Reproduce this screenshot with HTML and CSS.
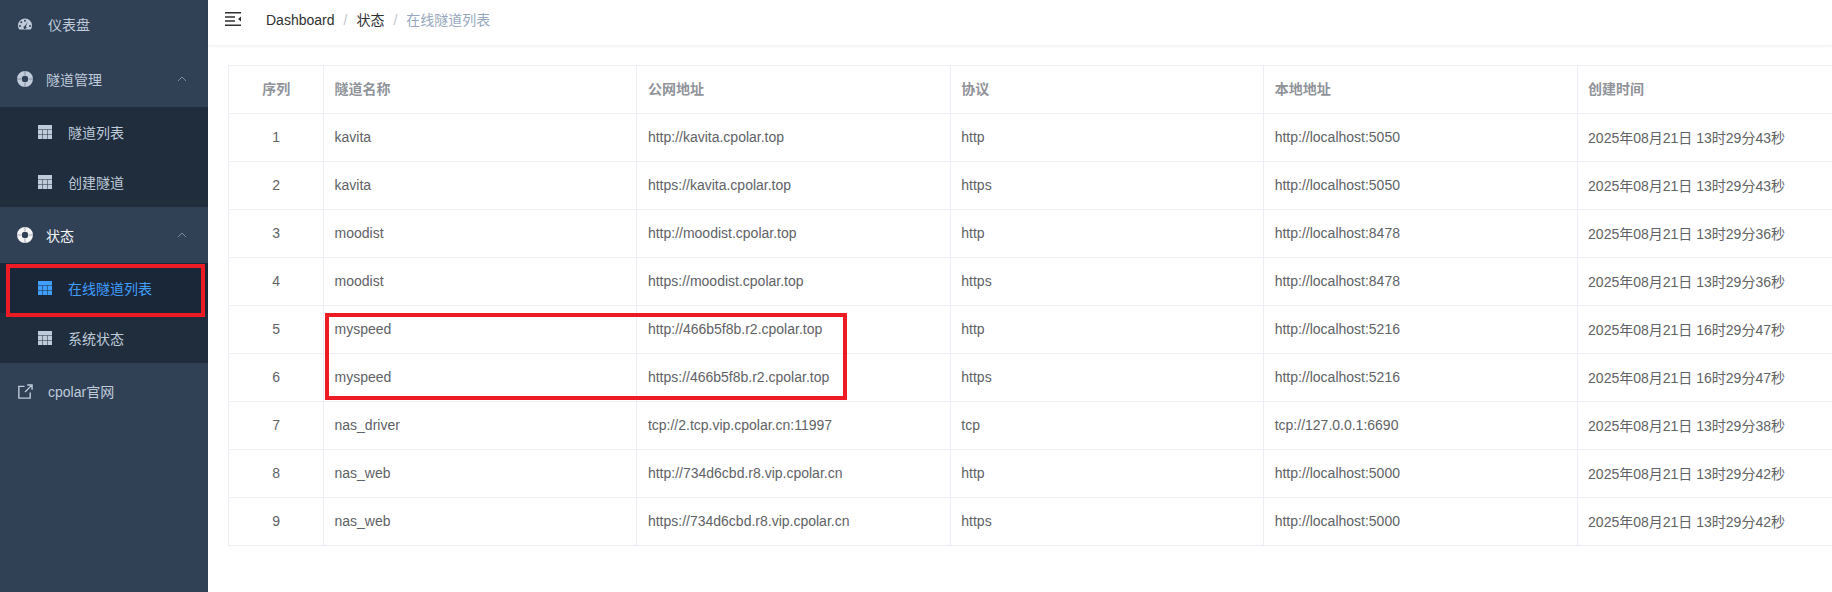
FILE: index.html
```html
<!DOCTYPE html>
<html lang="zh-CN">
<head>
<meta charset="utf-8">
<title>在线隧道列表</title>
<link rel="stylesheet" href="styles.css">
</head>
<body>
<div class="app">
  <aside class="sidebar">
    <a class="item first">
      <svg class="ic gauge" viewBox="1 2.200 14 11"><path fill-rule="evenodd" d="M8 2.200a7 7 0 0 0-7 7c0 1.500.5 2.900 1.300 4h11.400a7 7 0 0 0 1.300-4 7 7 0 0 0-7-7zM8 3.500a1 1 0 1 1 0 2 1 1 0 0 1 0-2zM4.300 5a1 1 0 1 1 0 2 1 1 0 0 1 0-2zM3 8.700a1 1 0 1 1 0 2 1 1 0 0 1 0-2zM13 8.700a1 1 0 1 1 0 2 1 1 0 0 1 0-2zM10.800 5.400l-1.900 4.500a1.500 1.500 0 1 1-1.200-.3z"/></svg>
      <span class="lbl">仪表盘</span>
    </a>
    <a class="item group">
      <svg class="ic ring" viewBox="0 0 16 16"><circle cx="8" cy="8" r="5.600" fill="none" stroke="currentColor" stroke-width="4.800"/><path class="notch" d="M8 0v4M8 12v4M0 8h4M12 8h4"/></svg>
      <span class="lbl tight">隧道管理</span>
      <svg class="chev" viewBox="0 0 10 6"><path d="M1 5l4-4 4 4" fill="none" stroke="currentColor"/></svg>
    </a>
    <div class="sub">
      <a class="subitem"><svg class="ic" viewBox="0 0 14 14"><path d="M0 0h14v14H0z" class="grid"/><path d="M0 4.500h14M0 9.500h14M4.500 4.500v9.500M9.500 4.500v9.500" class="gridline"/></svg><span class="lbl">隧道列表</span></a>
      <a class="subitem"><svg class="ic" viewBox="0 0 14 14"><path d="M0 0h14v14H0z" class="grid"/><path d="M0 4.500h14M0 9.500h14M4.500 4.500v9.500M9.500 4.500v9.500" class="gridline"/></svg><span class="lbl">创建隧道</span></a>
    </div>
    <a class="item group open">
      <svg class="ic ring" viewBox="0 0 16 16"><circle cx="8" cy="8" r="5.600" fill="none" stroke="currentColor" stroke-width="4.800"/><path class="notch" d="M8 0v4M8 12v4M0 8h4M12 8h4"/></svg>
      <span class="lbl tight">状态</span>
      <svg class="chev" viewBox="0 0 10 6"><path d="M1 5l4-4 4 4" fill="none" stroke="currentColor"/></svg>
    </a>
    <div class="sub">
      <a class="subitem active"><svg class="ic" viewBox="0 0 14 14"><path d="M0 0h14v14H0z" class="grid"/><path d="M0 4.500h14M0 9.500h14M4.500 4.500v9.500M9.500 4.500v9.500" class="gridline"/></svg><span class="lbl">在线隧道列表</span></a>
      <a class="subitem"><svg class="ic" viewBox="0 0 14 14"><path d="M0 0h14v14H0z" class="grid"/><path d="M0 4.500h14M0 9.500h14M4.500 4.500v9.500M9.500 4.500v9.500" class="gridline"/></svg><span class="lbl">系统状态</span></a>
    </div>
    <a class="item">
      <svg class="ic ext" viewBox="0 0 16 16"><path d="M7 2.500H.9v12.600H13V9M7.500 8.500L14 2M9.800 1h5.200v5.200" fill="none" stroke="currentColor" stroke-width="1.500"/></svg>
      <span class="lbl">cpolar官网</span>
    </a>
  </aside>
  <main class="main">
    <header class="topbar">
      <svg class="burger" viewBox="0 0 16 14"><path d="M0 .75h16M0 5h10M0 9h10M0 13.250h16" fill="none" stroke="#303133" stroke-width="1.500"/><path d="M16 4.500v5l-3-2.500z" fill="#303133"/></svg>
      <nav class="crumbs">
        <span class="crumb">Dashboard</span><span class="sep">/</span><span class="crumb">状态</span><span class="sep">/</span><span class="crumb last">在线隧道列表</span>
      </nav>
    </header>
    <section class="content">
      <table class="tbl">
        <colgroup><col class="c0"><col class="c1"><col class="c1"><col class="c1"><col class="c1"><col class="c1"></colgroup>
        <thead><tr><th class="num">序列</th><th>隧道名称</th><th>公网地址</th><th>协议</th><th>本地地址</th><th>创建时间</th></tr></thead>
        <tbody>
          <tr><td class="num">1</td><td>kavita</td><td>http://kavita.cpolar.top</td><td>http</td><td>http://localhost:5050</td><td>2025年08月21日 13时29分43秒</td></tr>
          <tr><td class="num">2</td><td>kavita</td><td>https://kavita.cpolar.top</td><td>https</td><td>http://localhost:5050</td><td>2025年08月21日 13时29分43秒</td></tr>
          <tr><td class="num">3</td><td>moodist</td><td>http://moodist.cpolar.top</td><td>http</td><td>http://localhost:8478</td><td>2025年08月21日 13时29分36秒</td></tr>
          <tr><td class="num">4</td><td>moodist</td><td>https://moodist.cpolar.top</td><td>https</td><td>http://localhost:8478</td><td>2025年08月21日 13时29分36秒</td></tr>
          <tr><td class="num">5</td><td>myspeed</td><td>http://466b5f8b.r2.cpolar.top</td><td>http</td><td>http://localhost:5216</td><td>2025年08月21日 16时29分47秒</td></tr>
          <tr><td class="num">6</td><td>myspeed</td><td>https://466b5f8b.r2.cpolar.top</td><td>https</td><td>http://localhost:5216</td><td>2025年08月21日 16时29分47秒</td></tr>
          <tr><td class="num">7</td><td>nas_driver</td><td>tcp://2.tcp.vip.cpolar.cn:11997</td><td>tcp</td><td>tcp://127.0.0.1:6690</td><td>2025年08月21日 13时29分38秒</td></tr>
          <tr><td class="num">8</td><td>nas_web</td><td>http://734d6cbd.r8.vip.cpolar.cn</td><td>http</td><td>http://localhost:5000</td><td>2025年08月21日 13时29分42秒</td></tr>
          <tr><td class="num">9</td><td>nas_web</td><td>https://734d6cbd.r8.vip.cpolar.cn</td><td>https</td><td>http://localhost:5000</td><td>2025年08月21日 13时29分42秒</td></tr>
        </tbody>
      </table>
    </section>
  </main>
  <div class="mark mark-side"></div>
  <div class="mark mark-table"></div>
</div>
</body>
</html>
```
FILE: styles.css
```css
* { box-sizing: border-box; }
html, body { margin: 0; height: 100%; overflow: hidden; background: #fff; }
body { font-family: "Liberation Sans", "Noto Sans CJK SC", sans-serif; font-size: 14px; }
.app { display: flex; position: relative; height: 592px; overflow: hidden; }

.sidebar { flex: 0 0 208px; background: #304156; color: #bfcbd9; }
.item { display: flex; align-items: center; height: 56px; padding-left: 18px; position: relative; }
.item.first { margin-top: -4px; height: 55px; }
.item .lbl { margin-left: 16px; }
.item .lbl.tight { margin-left: 13px; }
.item.open { color: #f4f4f5; }
.ic { width: 14px; height: 14px; fill: currentColor; flex: none; }
.gauge { height: 12px; }
.ext { width: 15px; height: 15px; margin-right: -1px; }
.ring { width: 16px; height: 16px; margin-left: -1px; }
.notch { fill: none; stroke: #304156; stroke-width: .7; opacity: .6; }
.chev { position: absolute; left: 177px; top: 25px; width: 10px; height: 6px; color: #7d8da0; }
.sub { background: #1f2d3d; }
.subitem { display: flex; align-items: center; height: 50px; padding-left: 38px; }
.subitem .lbl { margin-left: 16px; }
.subitem.active { background: #1a2738; color: #409eff; }
.grid { fill: currentColor; }
.gridline { fill: none; stroke: #1f2d3d; stroke-width: 1; opacity: .5; }
.active .gridline { stroke: #1a2738; }

.main { flex: 1; min-width: 0; }
.topbar { display: flex; align-items: center; height: 45px; padding: 0 0 7px 17px; box-shadow: 0 1px 4px rgba(0, 21, 41, .08); }
.burger { width: 16px; height: 14px; flex: none; }
.crumbs { margin-left: 25px; color: #303133; }
.sep { margin: 0 9px; color: #c0c4cc; }
.crumb.last { color: #97a8be; }

.content { padding: 20px; }
.tbl { border-collapse: collapse; table-layout: fixed; width: 1662px; color: #606266; }
.c0 { width: 95px; }
.c1 { width: 313.400px; }
.tbl th, .tbl td { height: 48px; padding: 0 10px 2px 10.500px; border: 1px solid #ebeef5; text-align: left; font-weight: 400; white-space: nowrap; }
.tbl th { color: #909399; font-weight: 700; padding-bottom: 3px; }
.tbl .num { text-align: center; }

.mark { position: absolute; border: 4px solid #ed1c24; }
.mark-side { left: 6px; top: 264px; width: 199px; height: 53px; }
.mark-table { left: 325px; top: 313px; width: 522px; height: 87px; }
```
